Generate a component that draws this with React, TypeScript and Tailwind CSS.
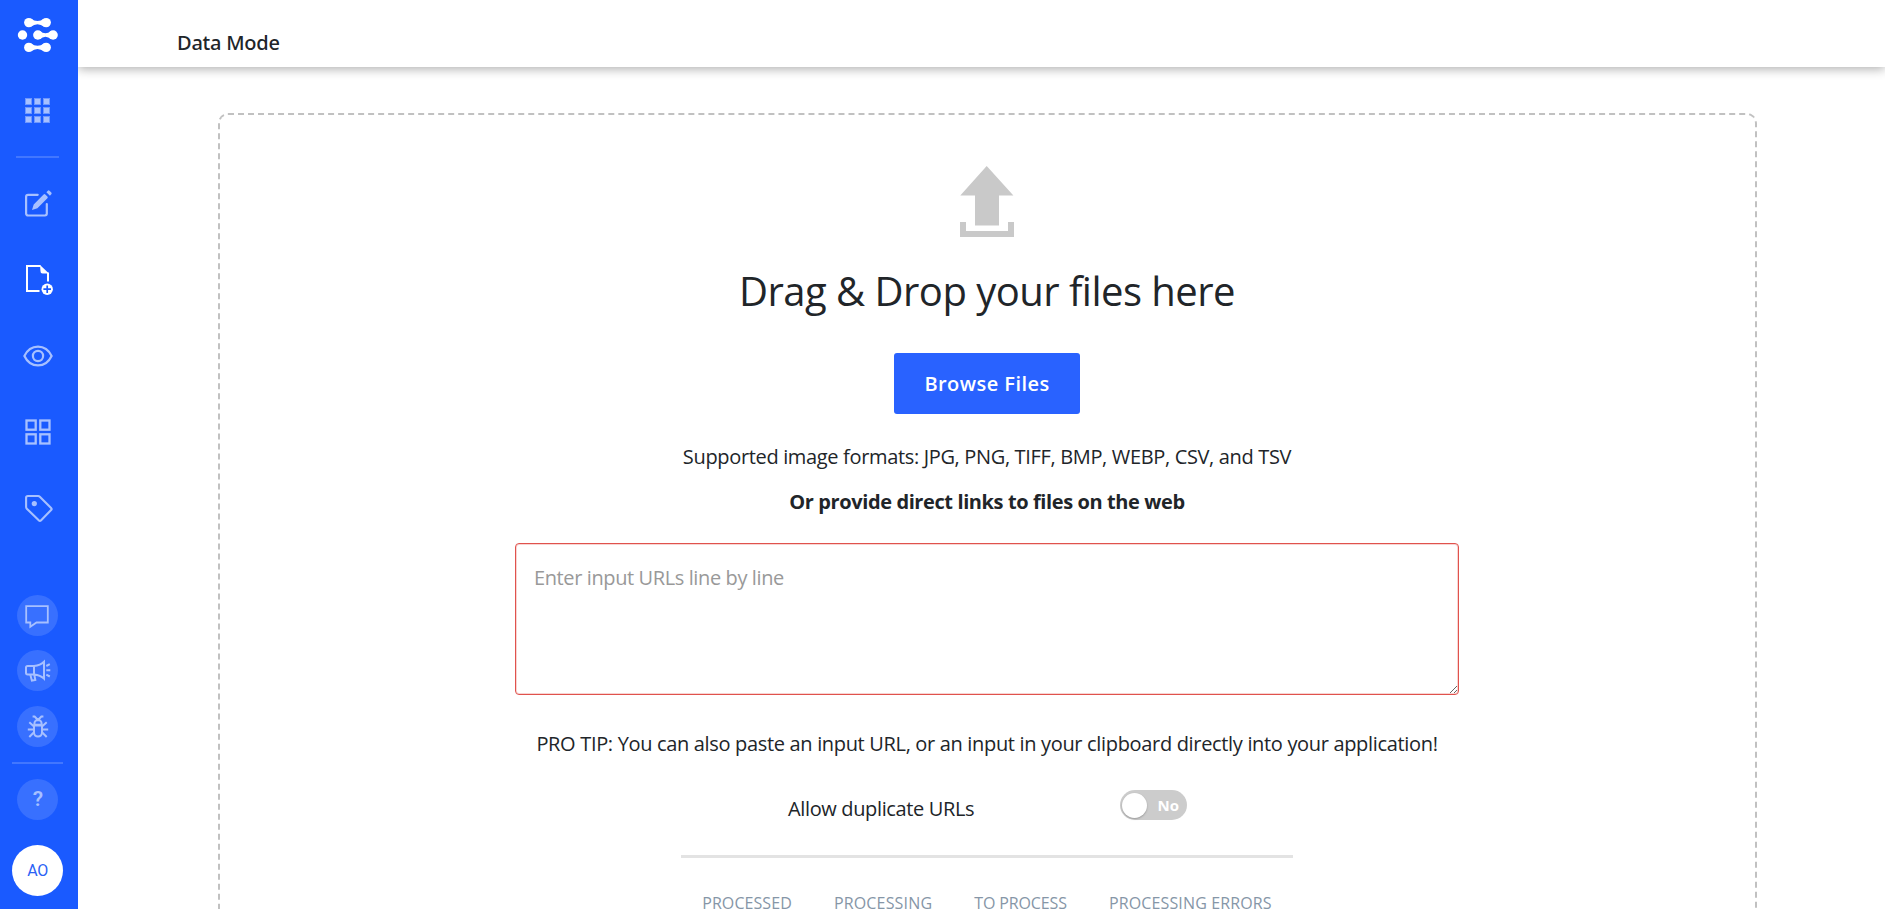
import type { ReactNode } from 'react';

const light = '#a7c0ff';

function Dumbbell({ x1, x2, y }: { x1: number; x2: number; y: number }) {
  const m = (x1 + x2) / 2;
  return (
    <>
      <circle cx={x1} cy={y} r={4.7} />
      <circle cx={x2} cy={y} r={4.7} />
      <path d={`M${x1 + 2} ${y - 4.2}Q${m} ${y + 0.8} ${x2 - 2} ${y - 4.2}V${y + 4.2}Q${m} ${y - 0.8} ${x1 + 2} ${y + 4.2}Z`} />
    </>
  );
}

function Logo() {
  return (
    <svg className="mt-[17px] h-9 w-[45px] shrink-0" viewBox="-0.5 0 45 36" fill="#fff">
      <Dumbbell x1={13.3} x2={30.7} y={5.6} />
      <circle cx={7} cy={18} r={4.7} />
      <Dumbbell x1={22.3} x2={37.6} y={18} />
      <Dumbbell x1={13.3} x2={30.7} y={30.4} />
    </svg>
  );
}

function AppsIcon() {
  return (
    <svg className="mt-11 h-[27px] w-[27px] shrink-0" viewBox="0 0 27 27" fill={light}>
      {[1, 10, 19].map((y) =>
        [1, 10, 19].map((x) => (
          <g key={`${x}-${y}`}>
            <rect x={x} y={y} width={7} height={7} fillOpacity={0.6} />
            <rect x={x + 1} y={y + 1} width={5} height={5} />
          </g>
        )),
      )}
    </svg>
  );
}

function EditIcon() {
  return (
    <svg className="mt-[30px] ml-px h-[30px] w-[30px] shrink-0" viewBox="0 0 30 30" fill="none">
      <path d="M14.7 6.8H5a1.9 1.9 0 0 0-1.9 1.9v16.9A1.9 1.9 0 0 0 5 27.5h16.9a1.9 1.9 0 0 0 1.9-1.9V16" stroke={light} strokeWidth={2.2} strokeLinecap="round" />
      <path d="M9 22l1.700-5.600L20.600 6.500a1.200 1.200 0 0 1 1.700 0l2.100 2.100a1.200 1.200 0 0 1 0 1.700L14.400 20.300Z" fill={light} />
      <path d="M23.400 4.200l1.400-1.400a1.200 1.200 0 0 1 1.700 0l1.800 1.800a1.200 1.200 0 0 1 0 1.700l-1.400 1.400Z" fill={light} />
    </svg>
  );
}

function AddFileIcon() {
  return (
    <svg className="mt-[45px] h-8 w-[31px] shrink-0" viewBox="0 0 31 32" fill="none">
      <path d="M18.500 3H5V28H17.500M26 18.500V9.500" stroke="#fff" strokeWidth={2} />
      <path d="M18 2L27 10.500H20.800A2.200 2.200 0 0 1 18.500 8.200Z" fill="#fff" />
      <circle cx={25.200} cy={26.200} r={5.700} fill="#fff" />
      <path d="M25.200 22.400v7.600M21.400 26.200h7.600" stroke="#1a5aff" strokeWidth={1.700} />
    </svg>
  );
}

function EyeIcon() {
  return (
    <svg className="mt-[49px] ml-px h-6 w-8 shrink-0" viewBox="0 0 32 24" fill="none" stroke={light} strokeWidth={2.200}>
      <path d="M2.400 12C5.100 6.300 10 2.600 16 2.600S26.900 6.300 29.600 12C26.900 17.700 22 21.400 16 21.400S5.100 17.700 2.400 12Z" />
      <circle cx={16} cy={12} r={5.100} />
    </svg>
  );
}

function SquaresIcon() {
  return (
    <svg className="mt-[50px] ml-px h-[28px] w-[28px] shrink-0" viewBox="0 0 28 28" fill="none" stroke={light} strokeWidth={2.300}>
      <rect x={2.500} y={2.500} width={9.200} height={9.200} />
      <rect x={16.300} y={2.500} width={9.200} height={9.200} />
      <rect x={2.500} y={16.300} width={9.200} height={9.200} />
      <rect x={16.300} y={16.300} width={9.200} height={9.200} />
    </svg>
  );
}

function TagIcon() {
  return (
    <svg className="mt-[47px] ml-px h-[30px] w-[30px] shrink-0" viewBox="0 0 30 30" fill="none">
      <path d="M4.900 3H15.100a2.400 2.400 0 0 1 1.700.7L28.100 15a1.500 1.500 0 0 1 0 2.100L17.900 27.600a1.300 1.300 0 0 1-1.900 0L3.800 15.700a2.400 2.400 0 0 1-.7-1.700V4.800A1.800 1.800 0 0 1 4.900 3Z" stroke={light} strokeWidth={2.100} />
      <circle cx={11.300} cy={10.600} r={2.600} fill={light} />
    </svg>
  );
}

function Round({ className, children }: { className: string; children: ReactNode }) {
  return (
    <div className={`flex h-[41px] w-[41px] shrink-0 items-center justify-center rounded-full bg-[#3870ff] ${className}`}>
      {children}
    </div>
  );
}

function Sidebar() {
  return (
    <aside className="flex w-[78px] shrink-0 flex-col items-center bg-[#1a5aff] pr-[3px]">
      <Logo />
      <AppsIcon />
      <div className="mt-8 h-[2px] w-[43px] shrink-0 bg-[#4277ff]" />
      <EditIcon />
      <AddFileIcon />
      <EyeIcon />
      <SquaresIcon />
      <TagIcon />

      <Round className="mt-[72px]">
        <svg className="mr-px h-[26px] w-[26px]" viewBox="0 0 26 26" fill="none" stroke={light} strokeWidth={1.800}>
          <path d="M2.200 3.200H23.800V19.500H12.500L6.300 23.700V19.500H2.200Z" />
        </svg>
      </Round>
      <Round className="mt-[14px]">
        <svg className="mr-px h-[26px] w-[28px]" viewBox="0 0 28 26" fill="none" stroke={light} strokeWidth={2}>
          <path d="M11 8H4.600a1.600 1.600 0 0 0-1.600 1.600v5.200a1.600 1.600 0 0 0 1.600 1.600H11Z" />
          <path d="M11 8C15 7.600 18.500 6.300 21 3.800V20.600C18.500 18.100 15 16.800 11 16.400M7.300 16.600L8.900 22.700l3.400-.7-1-5.400" />
          <path d="M23.300 8l3.500-1.900M23.300 12.300h4M23.300 16.600l3.500 1.900" />
        </svg>
      </Round>
      <Round className="mt-[15px]">
        <svg className="h-[26px] w-[26px]" viewBox="0 0 26 26" fill="none" stroke={light} strokeWidth={2}>
          <path d="M7.600 2.500h2L13 6l3.400-3.500h2M9.400 10.800V9.500a3.500 3.500 0 0 1 7.200 0v1.300Z" />
          <path d="M9 11.400h8v7.200a4 4 0 0 1-8 0Z" />
          <path d="M2.800 15.500h6M17.200 15.500h6M9 12.500L4.300 8.300M17 12.500l4.700-4.200M9 18.300l-4.700 4.700M17 18.300l4.700 4.700" />
        </svg>
      </Round>

      <div className="mt-[15px] h-[2px] w-[51px] shrink-0 bg-[#4277ff]" />
      <Round className="mt-[15px]">
        <span className="pl-px font-['Roboto'] text-[21px] leading-none font-semibold text-[#a7c0ff]">?</span>
      </Round>
      <div className="mt-[25px] flex h-[51px] w-[51px] shrink-0 items-center justify-center rounded-full bg-white font-['Roboto'] text-[16px] tracking-[-0.4px] text-[#2a62f5]">
        AO
      </div>
    </aside>
  );
}

function UploadIcon() {
  return (
    <svg className="h-[71px] w-[54px] shrink-0" viewBox="0 0 54 71" fill="#c9c9c9">
      <path d="M26.700 0L53.400 29.500H39V59.500H15V29.500H.3Z" />
      <path d="M0 56H6V65H48V56H54V71H0Z" />
    </svg>
  );
}

export default function App() {
  return (
    <div className="flex h-screen overflow-hidden bg-white font-['Open_Sans','Noto_Sans',sans-serif] text-[20px] leading-[30px] text-[#212529]">
      <Sidebar />
      <div className="flex min-w-0 grow flex-col overflow-hidden">
        <header className="h-[67px] shrink-0 bg-white pt-7 pl-[99px] shadow-[0_2px_10px_rgba(0,0,0,0.32)]">
          <h1 className="font-['Noto_Sans',sans-serif] font-medium tracking-[-0.23px] whitespace-nowrap">Data Mode</h1>
        </header>

        <main className="mt-[46px] ml-[140px] flex h-[1000px] w-[1539px] shrink-0 flex-col items-center rounded-[10px] border-2 border-dashed border-[#c1c1c1] pt-[51px] pr-px whitespace-nowrap">
          <UploadIcon />
          <h2 className="mt-[30px] text-[40px] leading-[48px] tracking-[-0.53px]">Drag &amp; Drop your files here</h2>
          <button className="mt-[38px] h-[61px] w-[186px] shrink-0 rounded-[3px] bg-[#2962ff] pt-px text-[20px] font-semibold tracking-[0.44px] text-white">
            Browse Files
          </button>
          <p className="mt-7 tracking-[-0.34px]">Supported image formats: JPG, PNG, TIFF, BMP, WEBP, CSV, and TSV</p>
          <p className="mt-[15px] font-bold tracking-[-0.4px]">Or provide direct links to files on the web</p>
          <textarea
            className="mt-[26px] h-[152px] w-[944px] shrink-0 resize rounded-[4px] border border-[#e0524d] px-[18px] py-[19px] tracking-[-0.39px] shadow-[inset_0_0_0_1px_#f8d4d2] placeholder:text-[#999]"
            placeholder="Enter input URLs line by line"
          />
          <p className="mt-[34px] tracking-[-0.33px]">
            PRO TIP: You can also paste an input URL, or an input in your clipboard directly into your application!
          </p>
          <div className="mt-[31px] flex h-[33px] w-[400px] shrink-0 items-start justify-between">
            <span className="pt-1 pl-px tracking-[-0.36px]">Allow duplicate URLs</span>
            <div className="flex h-[30px] w-[67px] items-center justify-between rounded-full bg-[#ccc] pr-[8px] pl-[2px]">
              <span className="h-[25px] w-[25px] rounded-full bg-white shadow-[0_1px_2px_rgba(0,0,0,0.25)]" />
              <span className="text-[15px] font-bold text-white">No</span>
            </div>
          </div>
          <div className="mt-8 h-[3px] w-[612px] shrink-0 bg-[#e3e3e3]" />
          <div className="mt-[33px] flex gap-[42px] text-[16px] leading-6 text-[#8696a7]">
            <span className="tracking-[0.08px]">PROCESSED</span>
            <span className="tracking-[0.17px]">PROCESSING</span>
            <span className="tracking-[-0.12px]">TO PROCESS</span>
            <span className="tracking-[0.14px]">PROCESSING ERRORS</span>
          </div>
        </main>
      </div>
    </div>
  );
}
